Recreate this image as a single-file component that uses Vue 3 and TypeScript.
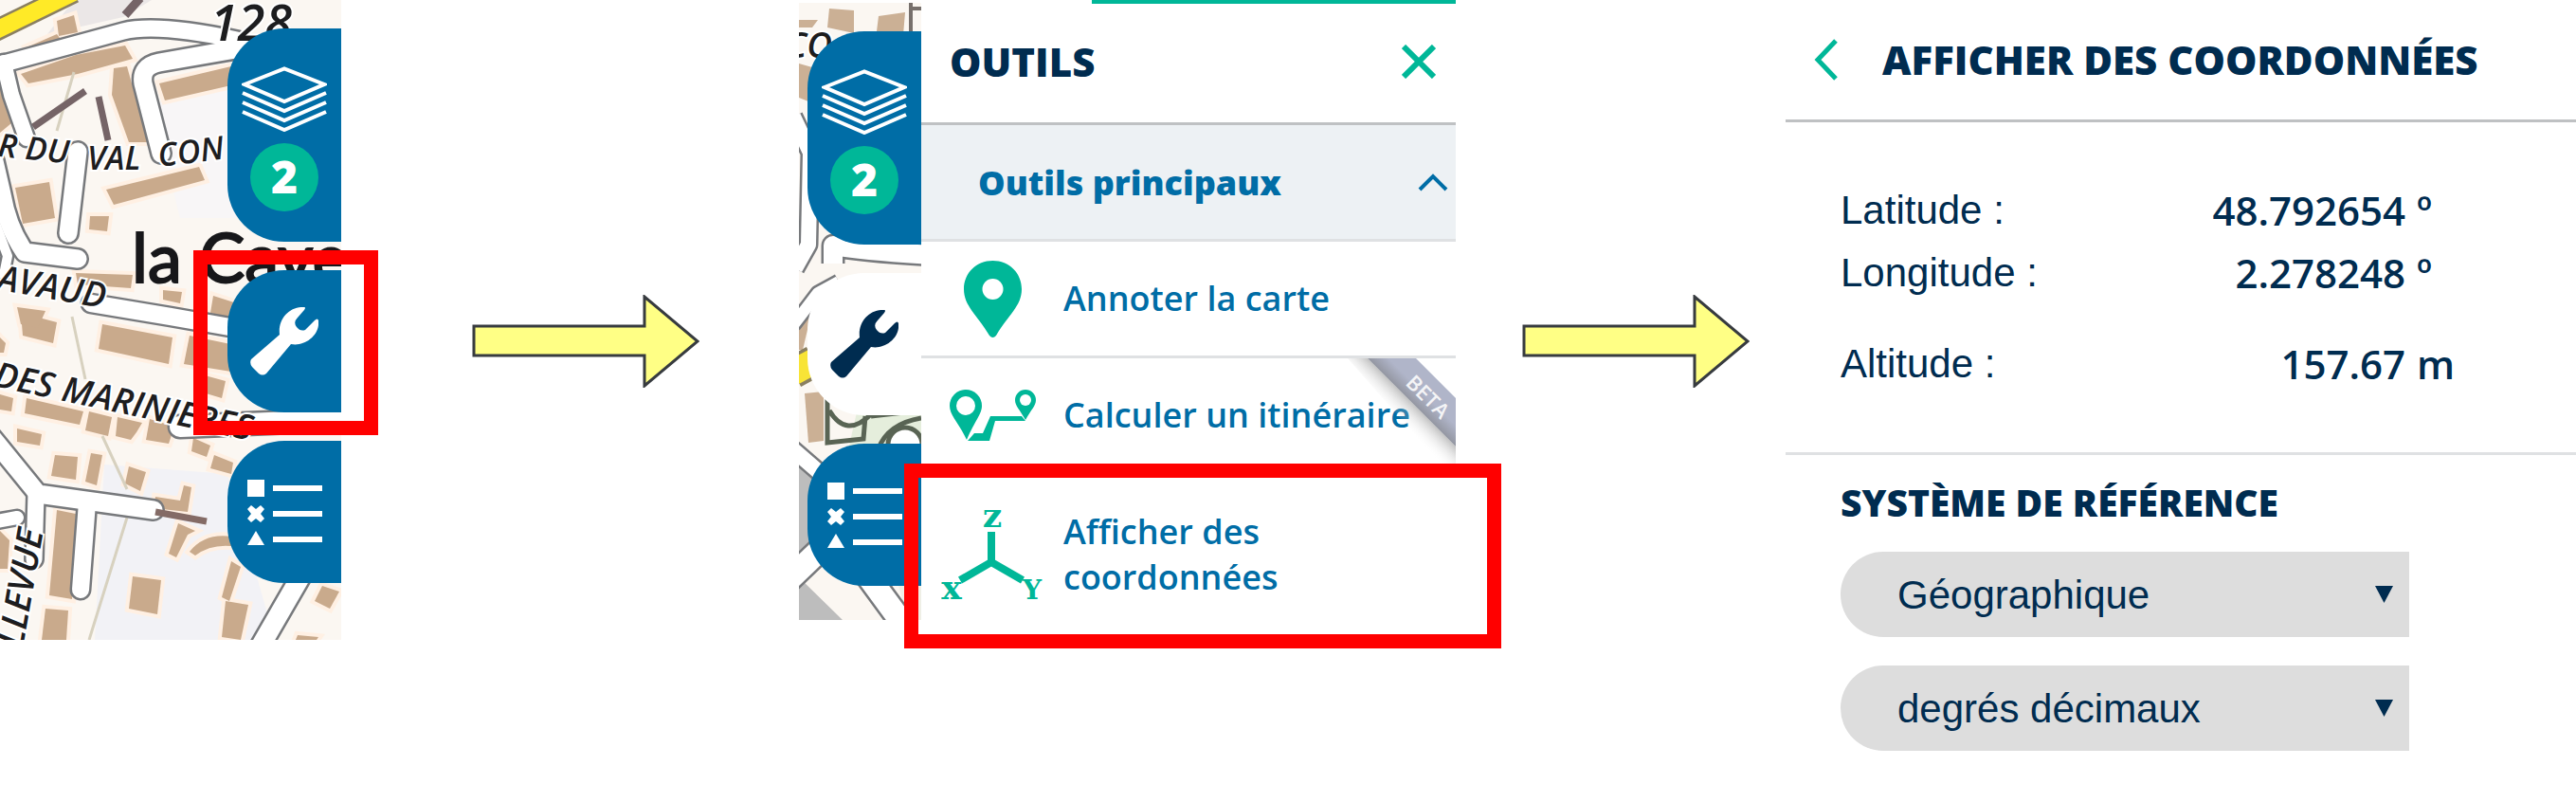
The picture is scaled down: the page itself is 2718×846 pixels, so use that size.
<script setup lang="ts">
import { ref } from 'vue'

type IconName = 'pin' | 'route' | 'axes'
interface Tool { id: IconName; label: string; beta?: boolean }
interface Shape { d: string; w?: number }
interface Coordinate { label: string; value: string; unit: string }

const tools: Tool[] = [
  { id: 'pin', label: 'Annoter la carte' },
  { id: 'route', label: 'Calculer un itinéraire', beta: true },
  { id: 'axes', label: 'Afficher des coordonnées' },
]

const coordinates: Coordinate[] = [
  { label: 'Latitude :', value: '48.792654', unit: 'º' },
  { label: 'Longitude :', value: '2.278248', unit: 'º' },
  { label: 'Altitude :', value: '157.67', unit: 'm' },
]

const systems = ['Géographique', 'Lambert 93']
const units = ['degrés décimaux', 'degrés sexagésimaux']
const system = ref(systems[0])
const unit = ref(units[0])

const maps = [
  { id: 'first', active: false },
  { id: 'second', active: true },
]

const roads: Shape[] = [
  { d: 'M-6 70L8 66L60 52L130 33Q165 24 250 42', w: 17 },
  { d: 'M4 66L12 100L28 146', w: 16 },
  { d: 'M260 50L168 66Q148 70 151 88L170 162', w: 19 },
  { d: 'M82 160L72 246', w: 19 },
  { d: 'M-6 170L2 205Q8 240 26 266L82 273', w: 19 },
  { d: 'M-4 238L8 270L4 290', w: 10 },
  { d: 'M96 320L180 334L260 348', w: 18 },
  { d: 'M-8 462L40 521L162 538', w: 19 },
  { d: 'M38 521L36 590', w: 17 },
  { d: 'M92 530L85 622', w: 18 },
  { d: 'M-4 550L18 546', w: 14 },
  { d: 'M270 690L322 600', w: 20 },
  { d: 'M190 450L380 442', w: 22 },
]

const buildings: string[] = [
  'M60 22L78 16L82 34L62 38Z', 'M28 50L60 36L66 44L34 58Z',
  'M22 78L80 58L132 48L140 62L82 78L30 88Z',
  'M120 72L134 70L156 150L136 150L118 100Z',
  'M168 88L244 70L244 90L174 106Z', 'M0 88L12 130L0 140Z',
  'M16 198L52 192L58 230L24 236Z', 'M112 200L210 176L216 190L120 216Z',
  'M95 228L115 228L113 244L94 242Z', 'M80 288L140 290L138 304L82 300Z',
  'M172 306L192 308L190 320L172 316Z', 'M22 330L60 340L56 362L24 354Z',
  'M18 324L48 328L40 346L22 342Z', 'M108 342L182 356L178 384L104 368Z',
  'M200 354L248 364L244 392L194 384Z', 'M28 420L88 434L84 448L26 436Z',
  'M0 416L14 420L12 434L0 432Z', 'M94 434L118 440L114 460L90 454Z',
  'M124 440L150 446L144 456L138 464L122 460Z', 'M158 442L184 450L178 468L154 464Z',
  'M204 462L222 470L218 482L202 476Z', 'M226 480L246 488L244 500L222 494Z',
  'M18 452L44 458L42 470L18 466Z', 'M58 480L82 482L80 506L54 502Z',
  'M96 478L108 480L102 512L90 508Z', 'M136 492L154 498L148 518L132 510Z',
  'M164 524L190 528L194 512L202 514L198 540L162 536Z',
  'M60 538L80 542L76 632L52 628Z', 'M48 642L72 644L70 675L44 675Z',
  'M140 608L170 612L166 648L136 642Z', 'M188 552L206 560L198 564L186 588L178 584Z',
  'M200 582Q216 562 244 566L244 576Q222 574 206 586Z',
  'M238 634L262 638L254 675L234 672Z', 'M244 592L254 598L242 634L234 630Z',
  'M340 618L358 624L348 642L332 634Z', 'M0 560L10 570L8 600L0 600Z',
  'M216 396L238 402L234 420L214 414Z', 'M314 670L336 672L334 675L312 675Z',
  'M0 356L6 362L4 372L0 372Z', 'M225 312L250 320L246 336L222 330Z',
]

const stripRoads: Shape[] = [
  { d: 'M-6 120L12 158L10 255L-4 280', w: 16 },
  { d: 'M36 275L36 256Q70 262 140 266', w: 20 },
  { d: 'M-6 340L20 306L42 294', w: 12 },
  { d: 'M-10 468L50 520L40 560', w: 16 },
  { d: 'M-12 610L40 560L128 680', w: 24 },
]

const stripBuildings: string[] = [
  'M32 6L58 8L58 32L30 26Z', 'M84 14L112 10L110 34L82 30Z', 'M0 64L14 68L10 104L0 100Z',
  'M44 250L64 254L60 270L40 268Z', 'M0 318L12 332L4 366L0 366Z', 'M6 412L26 410L26 462L10 464Z',
  'M0 18L20 18L14 26L0 26Z',
]
</script>

<template>
  <main class="tutorial">
    <template v-for="(map, i) in maps" :key="map.id">
      <section class="step" :class="`step-${map.id}`">
        <div class="map">
          <svg v-if="i === 0" class="map-drawing" viewBox="0 0 360 675" preserveAspectRatio="xMinYMin slice" aria-hidden="true">
            <rect width="360" height="675" fill="#fbf7f2" />
            <path d="M110 490L240 500L290 675H100Z" fill="#f2f2f6" />
            <path d="M160 110L250 90V230L190 230Z" fill="#f8f6f7" />
            <path d="M78 0H160L130 18L50 36Z" fill="#ebe7e7" />
            <g fill="#fff0e3" stroke="#fff0e3" stroke-width="8"><path v-for="d in buildings" :key="d" :d="d" /></g>
            <g fill="#c9aa8c"><path v-for="d in buildings" :key="d" :d="d" /></g>
            <g fill="none" stroke="#d7d1bf" stroke-width="3">
              <path d="M78 76L60 138M76 334L90 400M108 460L134 516M134 546L94 675" />
            </g>
            <g fill="none" stroke="#77797c" stroke-linecap="round" stroke-linejoin="round">
              <path v-for="r in roads" :key="r.d" :d="r.d" :stroke-width="(r.w ?? 0) + 5" />
            </g>
            <g fill="none" stroke="#fff" stroke-linecap="round" stroke-linejoin="round">
              <path v-for="r in roads" :key="r.d" :d="r.d" :stroke-width="r.w" />
            </g>
            <path d="M-8 34L78 -8" stroke="#8a7f60" stroke-width="23" />
            <path d="M-8 34L78 -8" stroke="#ffea27" stroke-width="18" />
            <path d="M35 134L90 96M104 102L114 148" stroke="#756467" stroke-width="7" fill="none" />
            <path d="M132 16L148 -2" stroke="#756467" stroke-width="9" />
            <path d="M164 540L218 550" stroke="#846b66" stroke-width="7" />
            <g class="map-label" fill="#1d1d1f">
              <text x="222" y="43" font-size="52">128</text>
              <text x="-3" y="165" font-size="34" transform="rotate(6 0 164)">R DU</text>
              <text x="92" y="179" font-size="34">VAL</text>
              <text x="168" y="176" font-size="34" transform="rotate(-7 168 176)">CON</text>
              <text x="-4" y="306" font-size="37" transform="rotate(10 0 306)">AVAUD</text>
              <text x="-8" y="407" font-size="37" transform="rotate(12 -8 407)">DES MARINIERES</text>
              <text x="24" y="684" font-size="38" transform="rotate(-80 24 684)">LLEVUE</text>
            </g>
            <text class="place-label" x="139" y="298">la Cave</text>
          </svg>
          <svg v-else class="map-drawing" viewBox="0 0 129 651" preserveAspectRatio="xMinYMin slice" aria-hidden="true">
            <rect width="129" height="651" fill="#fbf7f2" />
            <path d="M0 488L20 505V590L0 592ZM0 606L46 651H0Z" fill="#bdbdbd" />
            <path d="M66 410H129V480H50Z" fill="#e5eedc" />
            <path d="M90 560H129V651H115Z" fill="#efefe6" />
            <g fill="#cbb095"><path v-for="d in stripBuildings" :key="d" :d="d" /></g>
            <g fill="none" stroke="#77797c" stroke-linejoin="round">
              <path v-for="r in stripRoads" :key="r.d" :d="r.d" :stroke-width="(r.w ?? 0) + 5" />
            </g>
            <g fill="none" stroke="#fff" stroke-linejoin="round">
              <path v-for="r in stripRoads" :key="r.d" :d="r.d" :stroke-width="r.w" />
            </g>
            <path d="M-6 390L16 378" stroke="#8a7f60" stroke-width="34" />
            <path d="M-6 390L16 378" stroke="#f8e436" stroke-width="27" />
            <g fill="none" stroke="#596454" stroke-width="5">
              <path d="M30 410V464L68 460L70 436M32 430Q50 460 76 434M76 436L129 430M84 470Q94 444 129 438" />
              <circle cx="112" cy="466" r="18" fill="#fff" />
            </g>
            <path d="M118 0V34M129 6H120" stroke="#77706c" stroke-width="4" />
            <g class="map-label" fill="#1d1d1f"><text x="-14" y="58" font-size="37">CO</text></g>
          </svg>

          <nav class="tabs" aria-label="Carte">
            <button class="tab tab-layers" type="button" aria-label="Couches, 2">
              <svg class="layers" viewBox="0 0 90 69" aria-hidden="true">
                <g fill="none" stroke="#fff" stroke-width="4">
                  <path d="M3 19L45 2.500L87 19L45 37Z" />
                  <path d="M1 28L45 47L89 28M1 38L45 57L89 38M1 48L45 67L89 48" />
                </g>
              </svg>
              <span class="count">2</span>
            </button>
            <button class="tab" :class="{ active: map.active }" type="button" aria-label="Outils">
              <svg class="wrench" viewBox="0 0 72 72" aria-hidden="true">
                <path fill="currentColor" d="M57 0C42-1 29 12 31 29L1 55Q-1 59 2 63L9 70Q13 73 17 70L43 39C57 42 74 30 72 14Q71 11 68 14L58 24Q53 26 49 21Q45 16 50 11L57 3Q59 0 57 0Z" />
              </svg>
            </button>
            <button class="tab" type="button" aria-label="Légende">
              <svg class="legend" viewBox="0 0 79 69" fill="#fff" aria-hidden="true">
                <path d="M0 0H18V18H0ZM27 6H79V12H27ZM27 33H79V39H27ZM27 60H79V66H27ZM9 54L18 69H0Z" />
                <path d="M4 27L9 31L14 27L18 31L14 36L18 41L14 45L9 41L4 45L0 41L4 36L0 31Z" />
              </svg>
            </button>
          </nav>
        </div>

        <div v-if="i === 1" class="tools-panel">
          <header class="tools-head">
            <h2>OUTILS</h2>
            <button type="button" class="plain" aria-label="Fermer">
              <svg class="close" viewBox="0 0 36 36" aria-hidden="true"><path d="M2 2L34 34M34 2L2 34" stroke="#00b798" stroke-width="6" /></svg>
            </button>
          </header>
          <button type="button" class="group plain" aria-expanded="true">
            <span>Outils principaux</span>
            <svg class="caret" viewBox="0 0 32 20" aria-hidden="true"><path d="M2 18L16 4L30 18" fill="none" stroke="#006da6" stroke-width="4" /></svg>
          </button>
          <ul>
            <li v-for="tool in tools" :key="tool.id">
              <button type="button" class="tool plain">
                <span class="tool-icon">
                  <svg v-if="tool.id === 'pin'" class="pin" viewBox="0 0 61 81" aria-hidden="true">
                    <path fill="#00b798" d="M30.500 0C13 0 0 13 0 30C0 48 14 57 27 79Q30.500 83 34 79C47 57 61 48 61 30C61 13 48 0 30.500 0Z" />
                    <circle cx="30.500" cy="30" r="11" fill="#fff" />
                  </svg>
                  <svg v-else-if="tool.id === 'route'" class="route" viewBox="0 0 91 54" aria-hidden="true">
                    <path fill="#00b798" d="M19 54L26 46H35L43 28H76L80 33H48L42 54Z" />
                    <path fill="#00b798" d="M17 0A17 17 0 0 1 34 17C34 26 27 32 18 53C9 34 0 27 0 17A17 17 0 0 1 17 0Z" />
                    <path fill="#00b798" d="M80 0A11 11 0 0 1 91 11C91 17 86 21 80 32C74 21 69 17 69 11A11 11 0 0 1 80 0Z" />
                    <path d="M18 54L25 44" stroke="#fff" stroke-width="1" />
                    <circle cx="17" cy="17" r="10" fill="#fff" />
                    <circle cx="80" cy="11" r="6" fill="#fff" />
                  </svg>
                  <svg v-else class="axes" viewBox="0 0 108 96" aria-hidden="true">
                    <path d="M53 24V56L20 75M53 56L86 75" fill="none" stroke="#00b798" stroke-width="8" />
                    <g class="axis-name" fill="#00b798" text-anchor="middle">
                      <text x="54" y="19">z</text><text x="11" y="95">x</text><text class="axis-capital" x="96" y="95">Y</text>
                    </g>
                  </svg>
                </span>
                <span class="tool-label">{{ tool.label }}</span>
                <svg v-if="tool.beta" class="beta" viewBox="0 0 114 114" aria-hidden="true">
                  <defs>
                    <linearGradient id="ribbon" gradientUnits="userSpaceOnUse" x1="45" y1="46" x2="67" y2="24">
                      <stop offset="0" stop-color="#77787a" /><stop offset="1" stop-color="#b0b5c9" />
                    </linearGradient>
                    <linearGradient id="shade" gradientUnits="userSpaceOnUse" x1="67" y1="46" x2="50" y2="63">
                      <stop offset="0" stop-color="#888" stop-opacity=".5" /><stop offset="1" stop-color="#fff" stop-opacity="0" />
                    </linearGradient>
                  </defs>
                  <path d="M0 0H21L114 93V114H100Z" fill="url(#shade)" />
                  <path d="M21 0H72L114 42V93Z" fill="url(#ribbon)" />
                  <text x="84" y="48" transform="rotate(45 84 41)" text-anchor="middle" fill="#f4f4f6">BETA</text>
                </svg>
              </button>
            </li>
          </ul>
        </div>
        <div class="highlight" aria-hidden="true"></div>
      </section>

      <div class="link" :class="`link-${map.id}`">
        <svg class="arrow" viewBox="0 0 240 98" aria-hidden="true">
          <path d="M2 33H182V2L238 49L182 96V64H2Z" fill="#ffff85" stroke="#373b3f" stroke-width="3" />
        </svg>
      </div>
    </template>

    <section class="coords">
      <header class="coords-head">
        <button type="button" class="plain" aria-label="Retour">
          <svg class="back" viewBox="0 0 26 44" aria-hidden="true"><path d="M23 2L4 22L23 42" fill="none" stroke="#00b798" stroke-width="5" /></svg>
        </button>
        <h2>AFFICHER DES COORDONNÉES</h2>
      </header>
      <dl>
        <div v-for="c in coordinates" :key="c.label" class="coord">
          <dt>{{ c.label }}</dt>
          <dd class="value">{{ c.value }}</dd>
          <dd class="unit">{{ c.unit }}</dd>
        </div>
      </dl>
      <form class="reference">
        <h3>SYSTÈME DE RÉFÉRENCE</h3>
        <label class="choice">
          <select v-model="system" aria-label="Système de référence"><option v-for="s in systems" :key="s">{{ s }}</option></select>
          <svg viewBox="0 0 19 18" aria-hidden="true"><path d="M0 0H19L9.500 18Z" fill="#002c50" /></svg>
        </label>
        <label class="choice">
          <select v-model="unit" aria-label="Unité"><option v-for="u in units" :key="u">{{ u }}</option></select>
          <svg viewBox="0 0 19 18" aria-hidden="true"><path d="M0 0H19L9.500 18Z" fill="#002c50" /></svg>
        </label>
      </form>
    </section>
  </main>
</template>

<style>
body { margin: 0; background: #fff; }
</style>

<style scoped>
.tutorial {
  display: flex;
  align-items: flex-start;
  min-height: 100vh;
  overflow: hidden;
  color: #002c50;
  font-family: "Open Sans", "Noto Sans", sans-serif;
}
.tutorial * { box-sizing: border-box; }
h2, h3, ul, dl, dd { margin: 0; padding: 0; }
ul { list-style: none; }
svg { display: block; flex: none; }
button { font: inherit; color: inherit; cursor: pointer; }
.plain { border: 0; padding: 0; background: none; text-align: left; }

.step { position: relative; flex: none; display: flex; }
.step-first { width: 360px; }
.step-second { width: 693px; }
.map { position: relative; flex: none; }
.step-first .map { width: 360px; height: 675px; }
.step-second .map { width: 129px; height: 651px; margin-top: 3px; }
.map-drawing { width: 100%; height: 100%; }
.map-label { font-family: "Open Sans", sans-serif; font-style: italic; font-weight: 600; }
.map-label text { paint-order: stroke; stroke: #fff; stroke-width: 4px; }
.place-label {
  fill: #17171a;
  stroke: #17171a;
  stroke-width: 2px;
  font: 72px Lato, "Open Sans", sans-serif;
}

.tabs {
  position: absolute;
  top: 30px;
  right: 0;
  display: flex;
  flex-direction: column;
  gap: 30px;
}
.tab {
  display: flex;
  flex-direction: column;
  align-items: center;
  justify-content: center;
  gap: 12px;
  width: 120px;
  height: 150px;
  padding: 0;
  border: 0;
  border-radius: 60px 0 0 60px;
  background: #006da6;
  color: #fff;
}
.tab-layers { height: 225px; padding-top: 8px; }
.tab.active { background: #fff; color: #002c50; }
.layers { width: 90px; height: 69px; }
.count {
  width: 72px;
  height: 72px;
  border-radius: 50%;
  background: #00b798;
  font-size: 48px;
  font-weight: 800;
  line-height: 70px;
  text-align: center;
}
.wrench { width: 72px; height: 72px; }
.legend { width: 79px; height: 69px; }

.highlight { position: absolute; border: 15px solid #f00; pointer-events: none; }
.step-first .highlight { top: 264px; right: -39px; width: 195px; height: 195px; }
.step-second .highlight { top: 489px; left: 111px; right: -48px; height: 195px; }

.link { display: flex; justify-content: center; padding-top: 311px; }
.link-first { flex: 483 1 0; }
.link-second { flex: 348 1 0; }
.arrow { width: 240px; height: 98px; margin-left: 32px; }

.tools-panel { flex: 1; background: #fff; }
.tools-head {
  display: flex;
  align-items: center;
  justify-content: space-between;
  height: 132px;
  padding: 0 21px 0 30px;
  border-bottom: 3px solid #bfc1c3;
  background: linear-gradient(#00b798, #00b798) right top / 384px 4px no-repeat;
}
h2 { font-size: 42px; font-weight: 800; line-height: 60px; }
.close { width: 36px; height: 36px; }
.group {
  display: flex;
  align-items: center;
  justify-content: space-between;
  width: 100%;
  height: 123px;
  padding: 0 8px 0 60px;
  border-bottom: 3px solid #dfe1e3;
  background: #edf1f4;
  color: #006da6;
  font-size: 36px;
  font-weight: 800;
}
.caret { width: 32px; height: 20px; }
li + li { border-top: 3px solid #dfe1e3; }
.tool {
  position: relative;
  display: flex;
  align-items: center;
  width: 100%;
  min-height: 120px;
  color: #006da6;
  font-size: 36px;
  font-weight: 600;
  line-height: 48px;
}
li:last-child .tool { padding: 36px 0; }
li:last-child .tool-label { max-width: 280px; }
.tool-icon { flex: none; display: flex; justify-content: center; width: 150px; }
.pin { width: 61px; height: 81px; }
.route { width: 91px; height: 54px; }
.axes { width: 108px; height: 96px; }
.axis-name { font: bold 36px "DejaVu Serif", serif; }
.axis-capital { font-size: 28px; }
.beta { position: absolute; top: 0; right: 0; width: 114px; height: 114px; }
.beta text { font-size: 22px; font-weight: 600; }

.coords { flex: 834 1 0; min-width: 0; }
.coords-head {
  display: flex;
  align-items: center;
  gap: 46px;
  height: 129px;
  padding-left: 30px;
  border-bottom: 3px solid #bfc1c3;
}
.coords-head h2 { white-space: nowrap; }
.back { width: 26px; height: 44px; }
dl { padding: 60px 0 60px 58px; border-bottom: 3px solid #dfe1e3; }
.coord {
  display: grid;
  grid-template-columns: 300px 284px 60px;
  column-gap: 12px;
  font-size: 42px;
  line-height: 66px;
}
.coord:last-child { margin-top: 30px; }
dt { font-family: "Liberation Sans", sans-serif; }
dd { font-weight: 600; }
.value { text-align: right; }
.reference { padding: 26px 0 0 58px; }
h3 { margin-bottom: 28px; font-size: 39px; font-weight: 800; line-height: 48px; }
.choice { position: relative; display: block; width: 600px; margin-bottom: 30px; }
.choice svg { position: absolute; right: 17px; top: 36px; width: 19px; height: 18px; pointer-events: none; }
select {
  display: block;
  width: 100%;
  height: 90px;
  padding: 0 60px;
  border: 0;
  border-radius: 45px 0 0 45px;
  appearance: none;
  background: #ddd;
  color: #002c50;
  font: 42px "Liberation Sans", sans-serif;
}
</style>
